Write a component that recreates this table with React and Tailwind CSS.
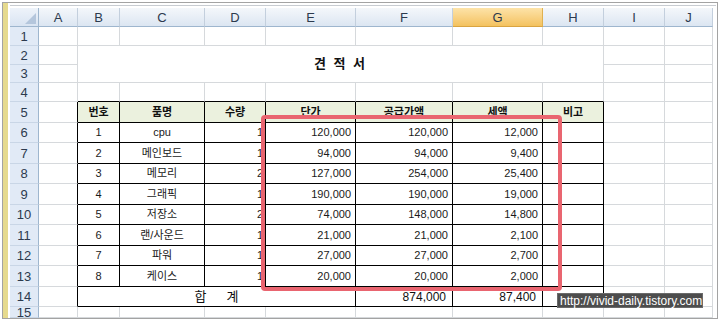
import React from 'react';

const items = [
  [1, 'cpu', 1, '120,000', '120,000', '12,000'],
  [2, '메인보드', 1, '94,000', '94,000', '9,400'],
  [3, '메모리', 2, '127,000', '254,000', '25,400'],
  [4, '그래픽', 1, '190,000', '190,000', '19,000'],
  [5, '저장소', 2, '74,000', '148,000', '14,800'],
  [6, '랜/사운드', 1, '21,000', '21,000', '2,100'],
  [7, '파워', 1, '27,000', '27,000', '2,700'],
  [8, '케이스', 1, '20,000', '20,000', '2,000'],
];

const letters = ['A', 'B', 'C', 'D', 'E', 'F', 'G', 'H', 'I', 'J'];

// gridline / border classes for a cell
const g = (rDark, bDark) =>
  `border-r border-b ${rDark ? 'border-r-black' : 'border-r-[#d6d9dc]'} ${bDark ? 'border-b-black' : 'border-b-[#d6d9dc]'}`;

const cellBase = 'flex items-center overflow-hidden whitespace-nowrap';

const RowHead = ({ n }) => (
  <div className="border-r border-b border-r-[#9eb6ce] border-b-[#c9d6e6] bg-[#e1eaf6] flex items-center justify-center text-[13px] text-[#2c3a4e] leading-none">
    {n}
  </div>
);

const Blank = ({ r = false, b = false, extra = '' }) => <div className={`${g(r, b)} ${cellBase} ${extra}`} />;

export default function App() {
  const cells = [];

  // column header row
  cells.push(
    <div key="corner" className="relative border-r border-b border-r-[#9eb6ce] border-b-[#9eb6ce] bg-linear-to-b from-[#eef3fa] to-[#d9e4f2]">
      <svg className="absolute right-[2px] bottom-[2px]" width="11" height="11" viewBox="0 0 11 11">
        <polygon points="11,0 11,11 0,11" fill="#b4c6dc" />
      </svg>
    </div>
  );
  letters.forEach((l) => {
    const hot = l === 'G';
    cells.push(
      <div
        key={`h${l}`}
        className={`border-r border-b ${
          hot
            ? 'bg-linear-to-b from-[#fde3a8] to-[#f4c25e] border-r-[#e0b150] border-b-[#d9a441]'
            : 'bg-linear-to-b from-[#f4f7fb] to-[#dce6f2] border-r-[#c3cfdd] border-b-[#9eb6ce]'
        } flex items-center justify-center text-[13px] text-[#2c3a4e] leading-none`}
      >
        {l}
      </div>
    );
  });

  // row 1
  cells.push(<RowHead key="r1" n={1} />);
  letters.forEach((l) => cells.push(<Blank key={`1${l}`} />));

  // rows 2-3 with merged title
  cells.push(<RowHead key="r2" n={2} />);
  cells.push(<Blank key="2A" />);
  cells.push(
    <div key="title" className={`col-span-7 row-span-2 ${g(false, false)} ${cellBase} justify-center`}>
      <span className="text-[13px] font-bold text-[#111] tracking-[2px]">견 적 서</span>
    </div>
  );
  cells.push(<Blank key="2I" />);
  cells.push(<Blank key="2J" />);
  cells.push(<RowHead key="r3" n={3} />);
  cells.push(<Blank key="3A" />);
  cells.push(<Blank key="3I" />);
  cells.push(<Blank key="3J" />);

  // row 4
  cells.push(<RowHead key="r4" n={4} />);
  cells.push(<Blank key="4A" />);
  ['B', 'C', 'D', 'E', 'F', 'G', 'H'].forEach((l) => cells.push(<Blank key={`4${l}`} b />));
  cells.push(<Blank key="4I" />);
  cells.push(<Blank key="4J" />);

  // row 5 header
  cells.push(<RowHead key="r5" n={5} />);
  cells.push(<Blank key="5A" r />);
  ['번호', '품명', '수량', '단가', '공급가액', '세액', '비고'].forEach((t) =>
    cells.push(
      <div key={`5${t}`} className={`${g(true, true)} ${cellBase} justify-center bg-[#ebf1de] text-[11px] font-bold text-[#111]`}>
        {t}
      </div>
    )
  );
  cells.push(<Blank key="5I" />);
  cells.push(<Blank key="5J" />);

  // data rows 6-13
  items.forEach((it, i) => {
    const rn = i + 6;
    cells.push(<RowHead key={`r${rn}`} n={rn} />);
    cells.push(<Blank key={`${rn}A`} r />);
    it.forEach((v, j) => {
      const align = j < 2 ? 'justify-center' : j === 2 ? 'justify-end pr-[2px]' : 'justify-end pr-[4px]';
      cells.push(
        <div key={`${rn}-${j}`} className={`${g(true, true)} ${cellBase} ${align} text-[11px] text-[#1a1a1a]`}>
          {v}
        </div>
      );
    });
    cells.push(<Blank key={`${rn}H`} r b />);
    cells.push(<Blank key={`${rn}I`} />);
    cells.push(<Blank key={`${rn}J`} />);
  });

  // row 14 totals
  cells.push(<RowHead key="r14" n={14} />);
  cells.push(<Blank key="14A" r />);
  cells.push(
    <div key="sum" className={`col-span-4 ${g(true, true)} ${cellBase} justify-center gap-[20px] text-[13px] text-[#111]`}>
      <span>합</span>
      <span>계</span>
    </div>
  );
  cells.push(
    <div key="14F" className={`${g(true, true)} ${cellBase} justify-end pr-[6px] text-[12px] text-[#111]`}>
      874,000
    </div>
  );
  cells.push(
    <div key="14G" className={`${g(true, true)} ${cellBase} justify-end pr-[6px] text-[12px] text-[#111]`}>
      87,400
    </div>
  );
  cells.push(<Blank key="14H" r b />);
  cells.push(<Blank key="14I" />);
  cells.push(<Blank key="14J" />);

  // row 15 (cut off)
  cells.push(<RowHead key="r15" n={15} />);
  letters.forEach((l) => cells.push(<Blank key={`15${l}`} />));

  return (
    <div className="relative w-[720px] h-[321px] bg-white overflow-hidden p-[2px] font-['Liberation_Sans','Noto_Sans_CJK_KR',sans-serif]">
      <div className="w-full h-full border border-[#a3a3a3] flex overflow-hidden">
        <div className="w-[5px] shrink-0 bg-[#e6da8e]" />
        <div className="w-[2px] shrink-0" />
        <div className="flex-1 flex flex-col overflow-hidden">
          <div className="h-[5px] shrink-0 pt-[2px]">
            <div className="h-[1px] w-[706px] bg-[#c8ccd1]" />
          </div>
          <div className="grid grid-cols-[29px_39px_42px_85px_61px_90px_97px_90px_61px_61px_48px] grid-rows-[19px_19px_19px_18px_19px_21px_20px_21px_20px_21px_20px_21px_20px_21px_20px_11px]">
            {cells}
          </div>
        </div>
      </div>

      {/* red highlight box */}
      <div className="absolute left-[261px] top-[115px] w-[301px] h-[176px] border-[4px] border-[#e96570] rounded-[4px]" />

      {/* watermark */}
      <div className="absolute left-[557px] top-[293px] w-[146px] h-[15px] bg-[#4d4d4d] border border-[#6a6a6a] flex items-center pl-[2px] text-[12px] leading-none text-white whitespace-nowrap">
        http://vivid-daily.tistory.com
      </div>
    </div>
  );
}
